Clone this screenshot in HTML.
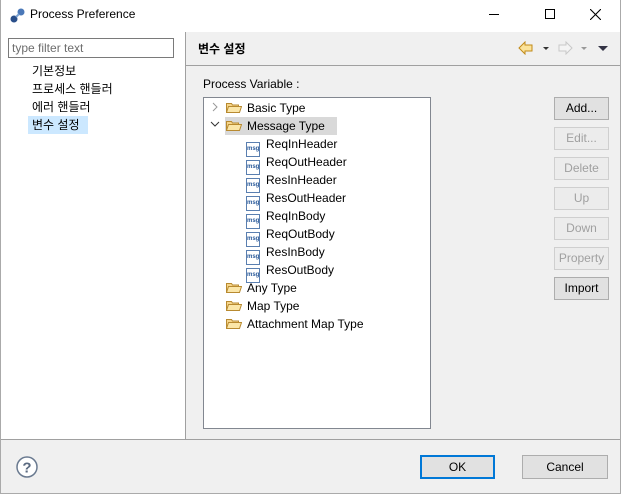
<!DOCTYPE html>
<html><head><style>
*{box-sizing:border-box;margin:0;padding:0}
body{width:621px;height:496px;background:#fff;font-family:"Liberation Sans","Noto Sans CJK KR",sans-serif;font-size:12px;color:#000;position:relative;overflow:hidden}
.a{position:absolute}
.win{left:0;top:0;width:621px;height:494px;border:1px solid #aaa;border-top:none}
.btn{position:absolute;left:554px;width:55px;height:23px;background:#e1e1e1;border:1px solid #adadad;text-align:center;line-height:21px;font-size:12px}
.dis{color:#a0a0a0;border-color:#cfcfcf;background:#ececec}
.row{position:absolute;height:18px;line-height:18px;white-space:nowrap}
.fold{display:inline-block;width:16px;height:11px;vertical-align:-1px;margin-right:5px}
.msg{display:inline-block;width:14px;height:15px;border:1px solid #5a7fb0;background:#fff;font-size:6px;color:#2a5a9a;line-height:12px;text-align:center;vertical-align:-2px;margin-right:6px;font-weight:bold}
</style></head><body>
<div class="a win"></div>
<svg class="a" style="left:9px;top:8px" width="18" height="16" viewBox="0 0 18 16"><circle cx="12" cy="4" r="3.5" fill="#4a78b8"/><circle cx="5" cy="11" r="3.5" fill="#2a4f8a"/><path d="M7 9 L10 6" stroke="#7aa0d0" stroke-width="2"/></svg>
<div class="a" style="left:30px;top:7px;font-size:12px">Process Preference</div>
<div class="a" style="left:489px;top:14px;width:10px;height:1px;background:#000"></div>
<div class="a" style="left:545px;top:9px;width:10px;height:10px;border:1px solid #000"></div>
<svg class="a" style="left:590px;top:9px" width="11" height="11"><path d="M0 0L11 11M11 0L0 11" stroke="#000" stroke-width="1.1"/></svg>
<div class="a" style="left:8px;top:38px;width:166px;height:20px;border:1px solid #7a7a7a;color:#6d6d6d;padding-left:3px;line-height:18px">type filter text</div>
<div class="a" style="left:32px;top:62px;line-height:18px">기본정보<br>프로세스 핸들러<br>에러 핸들러</div>
<div class="a" style="left:28px;top:116px;width:60px;height:18px;background:#cce8ff;padding-left:4px;line-height:18px">변수 설정</div>
<div class="a" style="left:185px;top:32px;width:1px;height:407px;background:#a0a0a0"></div>
<div class="a" style="left:186px;top:32px;width:434px;height:407px;background:#f0f0f0"></div>
<div class="a" style="left:186px;top:65px;width:434px;height:1px;background:#a0a0a0"></div>
<div class="a" style="left:198px;top:40px;font-weight:bold">변수 설정</div>
<svg class="a" style="left:518px;top:41px" width="95" height="14"><path d="M1 7L7 1V4H14V10H7V13Z" fill="#fbe39a" stroke="#c08a18"/><path d="M25 6h6l-3 3z" fill="#333"/><path d="M54 7L48 1V4H41V10H48V13Z" fill="#f4f4f4" stroke="#c8c8c8"/><path d="M63 6h6l-3 3z" fill="#999"/><path d="M80 5h10l-5 5z" fill="#334"/></svg>
<div class="a" style="left:203px;top:77px">Process Variable :</div>
<div class="a" style="left:203px;top:97px;width:228px;height:332px;background:#fff;border:1px solid #828790"></div>
<div class="a" style="left:225px;top:117px;width:112px;height:18px;background:#d9d9d9"></div>
<svg class="a" style="left:210px;top:100px" width="12" height="34"><path d="M3 3l4 4-4 4" stroke="#999" fill="none"/><path d="M1 22l4 4 4-4" stroke="#333" fill="none"/></svg>
<div id="tree"></div>
<div class="btn" style="top:97px">Add...</div>
<div class="btn dis" style="top:127px">Edit...</div>
<div class="btn dis" style="top:157px">Delete</div>
<div class="btn dis" style="top:187px">Up</div>
<div class="btn dis" style="top:217px">Down</div>
<div class="btn dis" style="top:247px">Property</div>
<div class="btn" style="top:277px">Import</div>
<div class="a" style="left:1px;top:439px;width:619px;height:54px;background:#f0f0f0;border-top:1px solid #a0a0a0"></div>
<svg class="a" style="left:15px;top:455px" width="24" height="24"><circle cx="12" cy="12" r="10" fill="#fff" stroke="#6a7a90" stroke-width="1.5"/><text x="12" y="17.5" text-anchor="middle" font-family="Liberation Sans" font-weight="bold" font-size="15" fill="#5a6a80">?</text></svg>
<div class="a" style="left:420px;top:455px;width:75px;height:24px;border:2px solid #0078d7;background:#e1e1e1;text-align:center;line-height:20px">OK</div>
<div class="a" style="left:522px;top:455px;width:86px;height:24px;border:1px solid #adadad;background:#e1e1e1;text-align:center;line-height:22px">Cancel</div>
<script>
var F='<svg class="fold" viewBox="0 0 16 11"><path d="M0.5 1.5h5l1 1.5h6v7.5h-12z" fill="#f6d58a" stroke="#b88a30"/><path d="M2.5 4.5h13l-2 6h-13z" fill="#fbe6a8" stroke="#b88a30"/></svg>';
var rows=[[99,226,F+'Basic Type'],[117,226,F+'Message Type']];
['ReqInHeader','ReqOutHeader','ResInHeader','ResOutHeader','ReqInBody','ReqOutBody','ResInBody','ResOutBody'].forEach(function(n,i){rows.push([135+i*18,246,'<span class="msg">msg</span>'+n])});
rows.push([279,226,F+'Any Type'],[297,226,F+'Map Type'],[315,226,F+'Attachment Map Type']);
var h='';rows.forEach(function(r){h+='<div class="row" style="top:'+r[0]+'px;left:'+r[1]+'px">'+r[2]+'</div>'});
document.getElementById('tree').innerHTML=h;
</script>
</body></html>
